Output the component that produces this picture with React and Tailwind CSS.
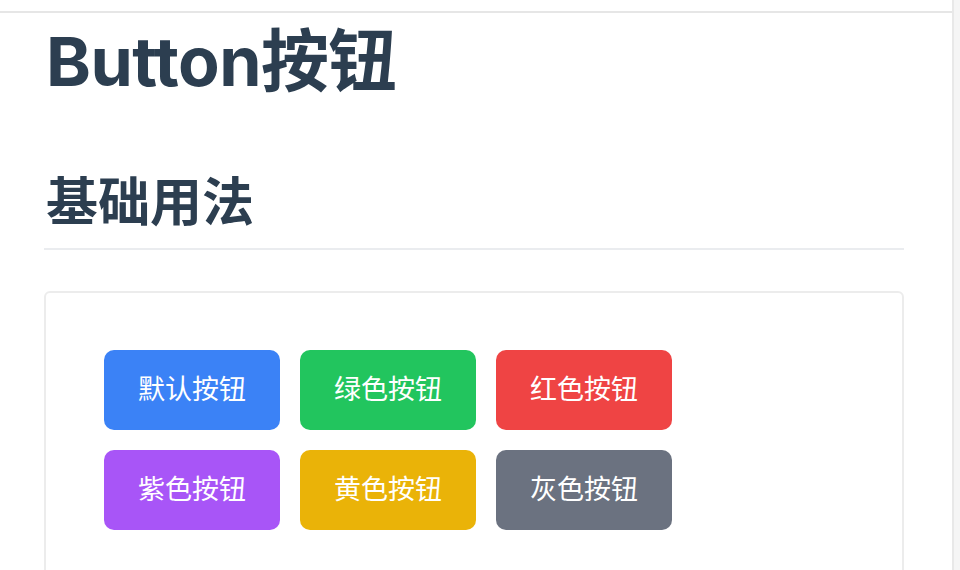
const buttons = [
  { label: "默认按钮", cls: "bg-[#3b82f6]" },
  { label: "绿色按钮", cls: "bg-[#22c55e]" },
  { label: "红色按钮", cls: "bg-[#ef4444]" },
  { label: "紫色按钮", cls: "bg-[#a855f7]" },
  { label: "黄色按钮", cls: "bg-[#eab308]" },
  { label: "灰色按钮", cls: "bg-[#6b7280]" },
];

export default function App() {
  return (
    <div
      className="flex h-[570px] w-[960px] overflow-hidden bg-white text-[#2c3e50]"
      style={{ fontFamily: 'Inter, "Noto Sans CJK SC", sans-serif' }}
    >
      <div className="flex flex-1 flex-col">
        <div className="h-[13px] shrink-0 border-b-2 border-[#e6e6e6]" />
        <div className="pl-[44px] pr-[48px]">
          <h1 className="mt-[6px] pl-[2px] text-[68px] font-bold leading-[84px] tracking-[-0.5px]">
            Button按钮
          </h1>
          <h2 className="mt-[65px] border-b-2 border-[#eaecef] pb-[10px] pl-[2px] text-[52px] font-bold leading-[70px]">
            基础用法
          </h2>
          <div className="mt-[41px] h-[400px] rounded-[6px] border-2 border-[#ececec] px-[58px] pt-[57px]">
            <div className="grid w-[568px] grid-cols-3 gap-[20px]">
              {buttons.map((b) => (
                <button
                  key={b.label}
                  className={`${b.cls} flex h-[80px] w-[176px] items-center justify-center rounded-[10px] text-[27px] text-white`}
                >
                  {b.label}
                </button>
              ))}
            </div>
          </div>
        </div>
      </div>
      <div className="w-[8px] shrink-0 border-l-2 border-[#e8e8e8] bg-[#f5f5f5]" />
    </div>
  );
}
